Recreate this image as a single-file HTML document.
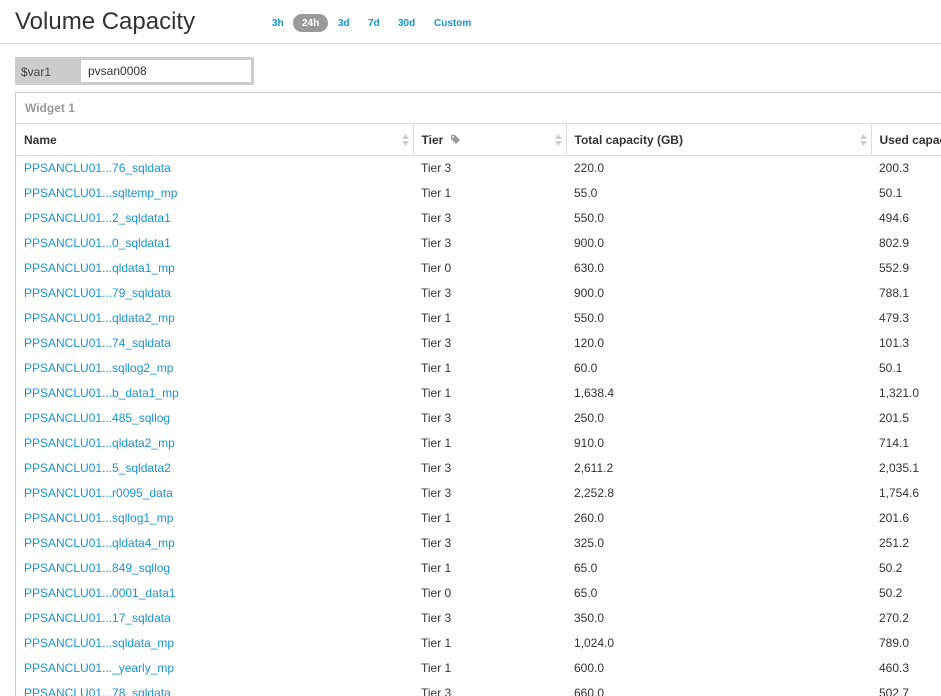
<!DOCTYPE html>
<html><head><meta charset="utf-8"><style>
*{box-sizing:border-box;margin:0;padding:0}
html,body{width:941px;height:696px;overflow:hidden}
body{background:#fff;font-family:"Liberation Sans",Arial,sans-serif;color:#333;position:relative}
.title{position:absolute;left:15px;top:8px;font-size:24px;color:#333}
.tr{position:absolute;top:14px;left:264px;font-size:10px;font-weight:bold;color:#1a93d4}
.tr span{position:absolute;top:0;height:18px;line-height:19px;white-space:nowrap}
.tr .on{background:#999;color:#fff;border-radius:9px;padding:0 9px}
.hl{position:absolute;left:0;top:43px;width:941px;height:1px;background:#ddd}
.var{position:absolute;left:15px;top:57px;width:239px;height:28px;background:#ccc}
.var .l{position:absolute;left:6px;top:8px;font-size:12px;color:#444}
.var .i{position:absolute;left:66px;top:3px;width:170px;height:22px;background:#fff;font-size:12px;line-height:22px;padding:0 7px;color:#333}
.w{position:absolute;left:15px;top:92px;width:940px;height:620px;border:1px solid #ccc;overflow:hidden}
.wt{position:absolute;left:9px;top:8px;font-size:12px;font-weight:bold;color:#999}
table{position:absolute;left:0;top:30px;border-collapse:collapse;font-size:12px;table-layout:fixed;width:1000px}
th{height:32px;border-top:1px solid #ddd;border-bottom:1px solid #ddd;border-right:1px solid #ddd;text-align:left;padding-left:8px;font-weight:bold;color:#333;position:relative}
th .s{position:absolute;right:4px;top:9px;width:7px;height:14px}
td{height:25px;padding-left:8px;white-space:nowrap;color:#333;line-height:23px}
td.n{color:#1a93d4}
</style></head><body>
<div class="title">Volume Capacity</div>
<div class="tr"><span style="left:8px">3h</span><span class="on" style="left:29px">24h</span><span style="left:74px">3d</span><span style="left:104px">7d</span><span style="left:134px">30d</span><span style="left:170px">Custom</span></div>
<div class="hl"></div>
<div class="var"><div class="l">$var1</div><div class="i">pvsan0008</div></div>
<div class="w"><div class="wt">Widget 1</div>
<table><colgroup><col style="width:397px"><col style="width:153px"><col style="width:305px"><col style="width:145px"></colgroup>
<tr><th>Name<svg class="s" viewBox="0 0 7 14"><path d="M0 6L3.5 1L7 6Z M0 8L3.5 13L7 8Z" fill="#ccc"/></svg></th><th>Tier <svg width="11" height="11" viewBox="0 0 11 11" style="vertical-align:-1px;margin-left:3px"><path d="M1 1H5L10 6L6 10L1 5Z" fill="#999"/><circle cx="3" cy="3" r="1" fill="#fff"/></svg><svg class="s" viewBox="0 0 7 14"><path d="M0 6L3.5 1L7 6Z M0 8L3.5 13L7 8Z" fill="#ccc"/></svg></th><th>Total capacity (GB)<svg class="s" viewBox="0 0 7 14"><path d="M0 6L3.5 1L7 6Z M0 8L3.5 13L7 8Z" fill="#ccc"/></svg></th><th>Used capacity (GB)</th></tr>
<tr><td class="n">PPSANCLU01...76_sqldata</td><td>Tier 3</td><td>220.0</td><td>200.3</td></tr>
<tr><td class="n">PPSANCLU01...sqltemp_mp</td><td>Tier 1</td><td>55.0</td><td>50.1</td></tr>
<tr><td class="n">PPSANCLU01...2_sqldata1</td><td>Tier 3</td><td>550.0</td><td>494.6</td></tr>
<tr><td class="n">PPSANCLU01...0_sqldata1</td><td>Tier 3</td><td>900.0</td><td>802.9</td></tr>
<tr><td class="n">PPSANCLU01...qldata1_mp</td><td>Tier 0</td><td>630.0</td><td>552.9</td></tr>
<tr><td class="n">PPSANCLU01...79_sqldata</td><td>Tier 3</td><td>900.0</td><td>788.1</td></tr>
<tr><td class="n">PPSANCLU01...qldata2_mp</td><td>Tier 1</td><td>550.0</td><td>479.3</td></tr>
<tr><td class="n">PPSANCLU01...74_sqldata</td><td>Tier 3</td><td>120.0</td><td>101.3</td></tr>
<tr><td class="n">PPSANCLU01...sqllog2_mp</td><td>Tier 1</td><td>60.0</td><td>50.1</td></tr>
<tr><td class="n">PPSANCLU01...b_data1_mp</td><td>Tier 1</td><td>1,638.4</td><td>1,321.0</td></tr>
<tr><td class="n">PPSANCLU01...485_sqllog</td><td>Tier 3</td><td>250.0</td><td>201.5</td></tr>
<tr><td class="n">PPSANCLU01...qldata2_mp</td><td>Tier 1</td><td>910.0</td><td>714.1</td></tr>
<tr><td class="n">PPSANCLU01...5_sqldata2</td><td>Tier 3</td><td>2,611.2</td><td>2,035.1</td></tr>
<tr><td class="n">PPSANCLU01...r0095_data</td><td>Tier 3</td><td>2,252.8</td><td>1,754.6</td></tr>
<tr><td class="n">PPSANCLU01...sqllog1_mp</td><td>Tier 1</td><td>260.0</td><td>201.6</td></tr>
<tr><td class="n">PPSANCLU01...qldata4_mp</td><td>Tier 3</td><td>325.0</td><td>251.2</td></tr>
<tr><td class="n">PPSANCLU01...849_sqllog</td><td>Tier 1</td><td>65.0</td><td>50.2</td></tr>
<tr><td class="n">PPSANCLU01...0001_data1</td><td>Tier 0</td><td>65.0</td><td>50.2</td></tr>
<tr><td class="n">PPSANCLU01...17_sqldata</td><td>Tier 3</td><td>350.0</td><td>270.2</td></tr>
<tr><td class="n">PPSANCLU01...sqldata_mp</td><td>Tier 1</td><td>1,024.0</td><td>789.0</td></tr>
<tr><td class="n">PPSANCLU01..._yearly_mp</td><td>Tier 1</td><td>600.0</td><td>460.3</td></tr>
<tr><td class="n">PPSANCLU01...78_sqldata</td><td>Tier 3</td><td>660.0</td><td>502.7</td></tr>
</table></div>
</body></html>
